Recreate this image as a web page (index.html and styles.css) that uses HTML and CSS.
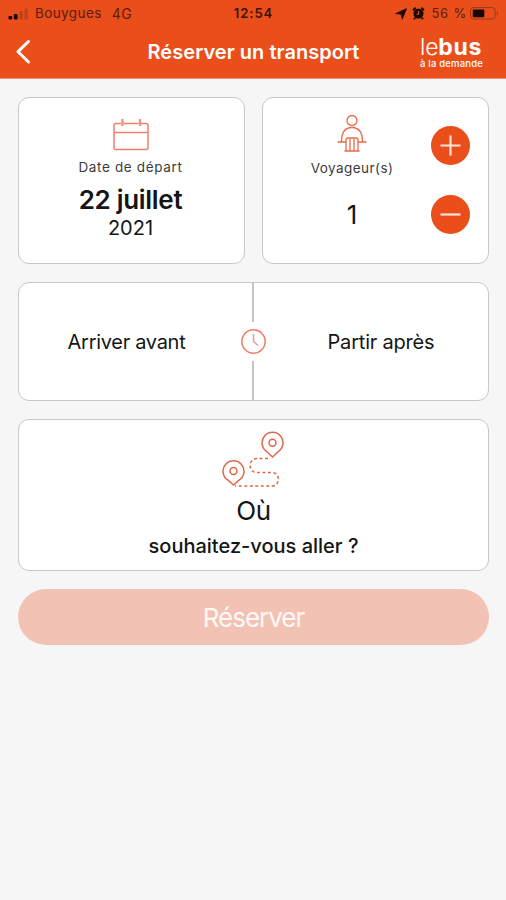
FILE: index.html
```html
<!DOCTYPE html>
<html lang="fr">
<head>
<meta charset="utf-8">
<title>Réserver un transport</title>
<link rel="stylesheet" href="styles.css">
</head>
<body>
<header class="top">
  <div class="status">
    <div class="status-left">
      <svg class="signal" width="20" height="12" viewBox="0 0 20 12"><rect x=".5" y="8" width="3.600" height="3.500" rx="1"/><rect x="5.800" y="6" width="3.800" height="5.500" rx="1"/><g opacity=".18"><rect x="11.500" y="3" width="3.400" height="8.500" rx="1"/><rect x="16.500" y=".5" width="3.400" height="11" rx="1"/></g></svg>
      <span class="carrier">Bouygues</span><span class="network">4G</span>
    </div>
    <span class="clock">12:54</span>
    <div class="status-right">
      <svg width="12" height="12" viewBox="0 0 12 12"><path d="M11.600.6 7.300 11.200 6.100 6.300.6 5.600Z" fill="#170804" stroke="#170804" stroke-width=".6"/></svg>
      <svg class="alarm" width="13" height="13" viewBox="0 0 13 13"><circle cx="6.500" cy="6.800" r="5"/><path d="M1 3.200 3.700.8M12 3.200 9.300.8M3 11l-1 1.200M10 11l1 1.200" stroke="#170804" stroke-width="2"/><path d="M6.500 4v3.200H4.500" fill="none" stroke="#e94e1b" stroke-width="1.100"/></svg>
      <span class="percent">56 %</span>
      <svg class="battery" width="30" height="13" viewBox="0 0 30 13"><rect x=".6" y=".6" width="24.500" height="11.400" rx="2.500" fill="none" stroke="#9c3a1a"/><rect x="2.800" y="2.600" width="11.500" height="7.600" rx="1" fill="#170804"/><path d="M26.800 4.100q2.500 2.200 0 4.400Z" fill="#9c3a1a"/></svg>
    </div>
  </div>
  <div class="nav">
    <svg class="back" width="16" height="26" viewBox="0 0 16 26"><path d="M13.500 2.500 3 12.700 13.500 23" fill="none" stroke="#fff" stroke-width="3" stroke-linecap="round" stroke-linejoin="round"/></svg>
    <h1>Réserver un transport</h1>
    <div class="brand"><div class="brand-name"><span>le</span><b>bus</b></div><div class="brand-tag">à la demande</div></div>
  </div>
</header>
<main>
  <div class="row">
    <section class="card date">
      <svg width="36" height="33" viewBox="0 0 36 33"><path d="M8 5.500H3a2 2 0 0 0-2 2v22a2 2 0 0 0 2 2h30a2 2 0 0 0 2-2v-22a2 2 0 0 0-2-2h-5M10.500 5.500h15M1 14.500h34" fill="none" stroke="#ee8068" stroke-width="1.500"/><path d="M9.500 1v7M27 1v7" stroke="#f09580" stroke-width="2.400"/></svg>
      <p class="label">Date de départ</p>
      <p class="day">22 juillet</p>
      <p class="year">2021</p>
    </section>
    <section class="card travellers">
      <div class="count">
        <svg width="30" height="39" viewBox="0 0 30 39"><g fill="none" stroke="#e96a48" stroke-width="1.300"><circle cx="15" cy="6.500" r="5"/><path d="M4.500 27.500C4.500 18 8 13.500 15 13.500s10.500 4.500 10.500 14M.5 28h8.500M21 28h8.500M9 37V26q0-2 2-2h8q2 0 2 2v11M13 25v12M17 25v12M7.500 37h15"/></g></svg>
        <p class="label">Voyageur(s)</p>
        <p class="number">1</p>
      </div>
      <div class="stepper">
        <button aria-label="Plus"><svg width="39" height="39" viewBox="0 0 39 39"><path d="M9.500 19.500h20M19.500 9.500v20" stroke="#ffe3d9" stroke-width="2.200"/></svg></button>
        <button aria-label="Moins"><svg width="39" height="39" viewBox="0 0 39 39"><path d="M9.500 19.500h20" stroke="#ffe3d9" stroke-width="2.200"/></svg></button>
      </div>
    </section>
  </div>
  <section class="card times">
    <div class="option arrive">Arriver avant</div>
    <div class="divider"><i></i><svg width="26" height="26" viewBox="0 0 26 26"><circle cx="13.500" cy="12.500" r="11.700" fill="none" stroke="#ec7d65" stroke-width="1.500"/><path d="M13.500 5v7.500l4.500 4" fill="none" stroke="#f09a87" stroke-width="1.500"/></svg><i></i></div>
    <div class="option leave">Partir après</div>
  </section>
  <section class="card where">
    <svg width="64" height="57" viewBox="0 0 64 57"><g fill="none" stroke="#e2674a" stroke-width="1.500"><path d="M50.500 27 45 21.800a10.500 10.500 0 1 1 11 0ZM11.500 55 6 50.200a10.500 10.500 0 1 1 11 0Z"/><circle cx="50.500" cy="12.700" r="3.500"/><circle cx="11.500" cy="41" r="3.500"/><path d="M46 28.500H34.500C26 28.500 26 42.500 34.500 42.500H50C58.500 42.500 58.500 56 50 56H13" stroke-dasharray="3 2.500"/></g></svg>
    <p class="ou">Où</p>
    <p class="question">souhaitez-vous aller ?</p>
  </section>
  <button class="reserve">Réserver</button>
</main>
</body>
</html>
```
FILE: styles.css
```css
* { box-sizing: border-box; }
body { margin: 0; height: 900px; background: #f6f6f6; color: #151515; font-family: Inter, "Liberation Sans", sans-serif; overflow: hidden; }
p, h1 { margin: 0; white-space: nowrap; }
svg { display: block; flex: none; }
button { border: 0; padding: 0; font-family: inherit; }
.top { height: 79px; background: #e94e1b; border-bottom: 1px solid #ef906f; }
.status { height: 27px; display: grid; grid-template-columns: 1fr auto 1fr; align-items: center; padding: 0 6px 0 8px; color: #5b200e; font-size: 13px; line-height: 27px; }
.status-left, .status-right { display: flex; align-items: center; }
.status-right { justify-content: flex-end; }
.signal { fill: #170804; margin-right: 7px; }
.alarm { fill: #170804; margin: 0 6px 0 5px; }
.carrier { font-size: 13.500px; letter-spacing: .4px; }
.network { font-size: 14px; margin-left: 10px; letter-spacing: .5px; }
.clock { font-weight: 600; color: #38150a; letter-spacing: 1px; margin-left: -1px; }
.percent { letter-spacing: .8px; }
.battery { margin-left: 3px; }
.nav { height: 51px; display: grid; grid-template-columns: 132px 1fr 132px; align-items: center; color: #fff; }
.back { margin: -2px 0 0 15px; }
h1 { text-align: center; font-size: 20px; font-weight: 600; line-height: 28px; letter-spacing: .05px; margin: -1px 0 0 1px; }
.brand { width: 64px; margin: 0 0 0 46px; }
.brand-name { font-size: 23px; line-height: 21px; letter-spacing: -.2px; white-space: nowrap; }
.brand-name span { font-weight: 300; }
.brand-name b { letter-spacing: .7px; }
.brand-tag { font-size: 9.500px; line-height: 11px; letter-spacing: .2px; white-space: nowrap; font-weight: 500; }
main { padding: 18px 17px 0 18px; display: flex; flex-direction: column; gap: 18px; }
.row { display: grid; grid-template-columns: 227px 227px; gap: 17px; }
.card { background: #fff; border: 1.500px solid #c8c8c8; border-radius: 11px; }
.date { height: 167px; display: flex; flex-direction: column; align-items: center; padding: 20px 2px 0 0; }
.label { color: #3c3c3c; font-size: 13.500px; line-height: 18px; letter-spacing: .45px; }
.date .label { margin-top: 7px; letter-spacing: .65px; }
.day { font-size: 26px; line-height: 32px; font-weight: 600; margin-top: 8px; letter-spacing: -.3px; }
.year { font-size: 20px; line-height: 24px; }
.travellers { height: 167px; display: grid; grid-template-columns: 168px 39px; }
.count { display: flex; flex-direction: column; align-items: center; padding: 16px 0 0 10px; }
.count .label { margin-top: 6px; }
.number { font-size: 26px; line-height: 32px; margin-top: 22px; }
.stepper { display: flex; flex-direction: column; gap: 30px; padding-top: 28px; }
.stepper button { width: 39px; height: 39px; border-radius: 50%; background: #e94e1b; }
.times { height: 119px; display: grid; grid-template-columns: 221px 26px 1fr; }
.option { align-self: center; text-align: center; font-size: 20px; line-height: 28px; letter-spacing: -.3px; }
.arrive { padding-right: 6px; }
.leave { padding-left: 8px; letter-spacing: -.2px; }
.divider { display: flex; flex-direction: column; align-items: center; justify-content: space-between; }
.divider i { width: 1.500px; height: 39px; background: #c4c4c4; }
.where { height: 152px; display: flex; flex-direction: column; align-items: center; padding-top: 10px; }
.ou { font-size: 26px; line-height: 32px; margin-top: 8px; letter-spacing: -.3px; }
.question { font-size: 20px; line-height: 26px; font-weight: 500; margin-top: 6px; }
.reserve { height: 56px; border-radius: 28px; background: #f2c3b4; color: #fff8f5; font-size: 26px; line-height: 58px; letter-spacing: -1px; }
```
